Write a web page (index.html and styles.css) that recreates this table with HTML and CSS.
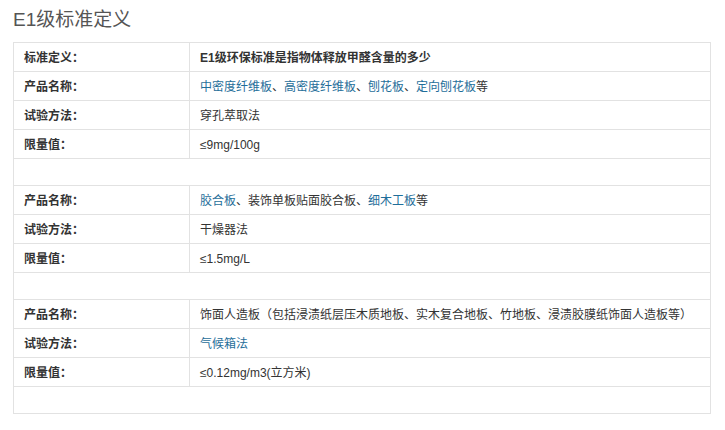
FILE: index.html
```html
<!DOCTYPE html>
<html lang="zh-CN">
<head>
<meta charset="utf-8">
<title>E1级标准定义</title>
<link rel="stylesheet" href="styles.css">
</head>
<body>
<div class="page">
  <h2 class="title">E1级标准定义</h2>
  <div class="table">
    <div class="row">
      <div class="label">标准定义：</div>
      <div class="value strong">E1级环保标准是指物体释放甲醛含量的多少</div>
    </div>
    <div class="row">
      <div class="label">产品名称：</div>
      <div class="value"><a class="link">中密度纤维板</a>、<a class="link">高密度纤维板</a>、<a class="link">刨花板</a>、<a class="link">定向刨花板</a>等</div>
    </div>
    <div class="row">
      <div class="label">试验方法：</div>
      <div class="value">穿孔萃取法</div>
    </div>
    <div class="row">
      <div class="label">限量值：</div>
      <div class="value">≤9mg/100g</div>
    </div>
    <div class="row empty"></div>
    <div class="row">
      <div class="label">产品名称：</div>
      <div class="value"><a class="link">胶合板</a>、装饰单板贴面胶合板、<a class="link">细木工板</a>等</div>
    </div>
    <div class="row">
      <div class="label">试验方法：</div>
      <div class="value">干燥器法</div>
    </div>
    <div class="row">
      <div class="label">限量值：</div>
      <div class="value">≤1.5mg/L</div>
    </div>
    <div class="row empty"></div>
    <div class="row">
      <div class="label">产品名称：</div>
      <div class="value">饰面人造板（包括浸渍纸层压木质地板、实木复合地板、竹地板、浸渍胶膜纸饰面人造板等）</div>
    </div>
    <div class="row">
      <div class="label">试验方法：</div>
      <div class="value"><a class="link">气候箱法</a></div>
    </div>
    <div class="row">
      <div class="label">限量值：</div>
      <div class="value">≤0.12mg/m3(立方米)</div>
    </div>
    <div class="row empty last"></div>
  </div>
</div>
</body>
</html>
```

FILE: styles.css
```css
html, body {
  margin: 0;
  padding: 0;
  background: #ffffff;
}

.page {
  padding: 0 14px 0 13px;
  font-family: "Liberation Sans", "Noto Sans CJK SC", sans-serif;
  color: #333333;
}

.title {
  margin: 0 0 9px 0;
  padding-top: 7px;
  font-size: 19px;
  line-height: 26px;
  font-weight: normal;
  color: #555555;
}

.table {
  border: 1px solid #e2e2e2;
  background: #ffffff;
}

.row {
  display: grid;
  grid-template-columns: 176px 1fr;
  height: 28px;
  border-bottom: 1px solid #e2e2e2;
  font-size: 12px;
  line-height: 26px;
}

.row.empty {
  display: block;
  height: 26px;
}

.row.last {
  border-bottom: none;
}

.label {
  border-right: 1px solid #e2e2e2;
  padding: 2px 0 0 10px;
  font-weight: bold;
  color: #333333;
}

.value {
  padding: 2px 0 0 10px;
  color: #333333;
  white-space: nowrap;
}

.value.strong {
  font-weight: bold;
}

.link {
  color: #1f6e9a;
  text-decoration: none;
}
```
